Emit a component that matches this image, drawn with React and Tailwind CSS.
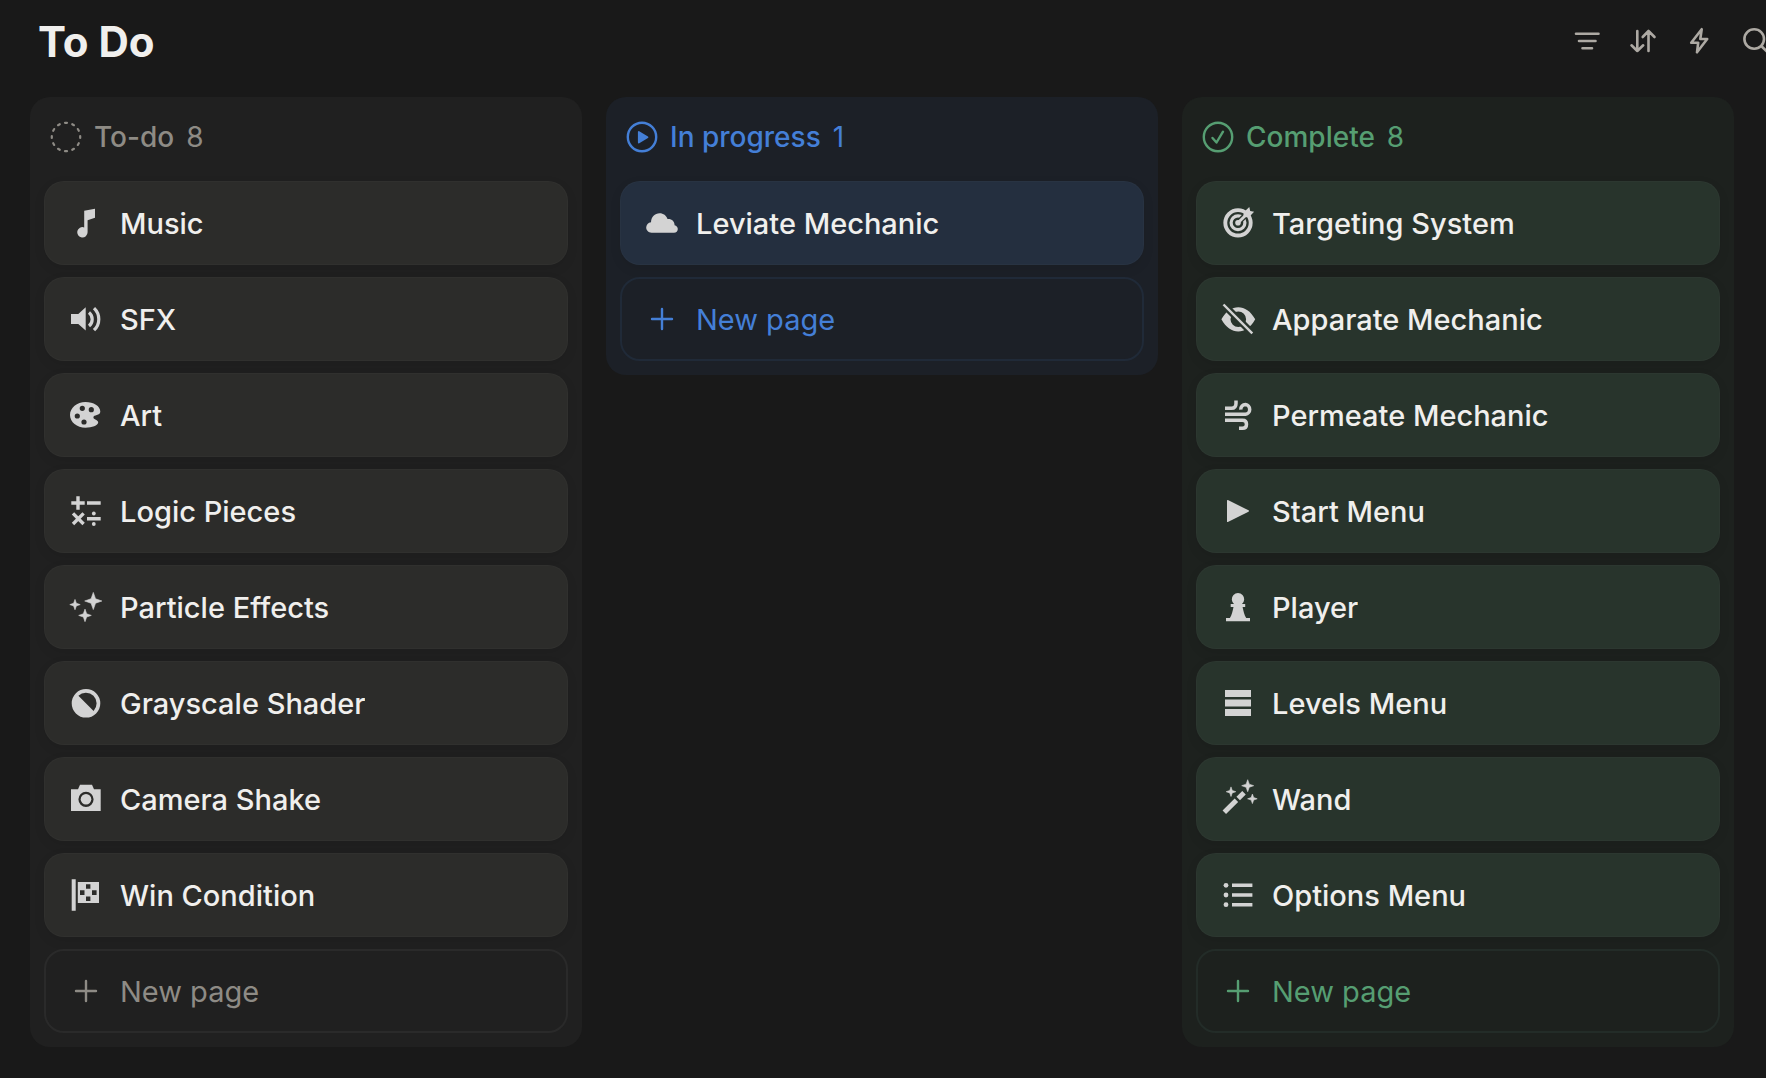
const Star = ({ x, y, r }) => {
  const k = r * 0.26;
  return (
    <path
      d={`M${x} ${y - r}L${x + k} ${y - k}L${x + r} ${y}L${x + k} ${y + k}L${x} ${y + r}L${x - k} ${y + k}L${x - r} ${y}L${x - k} ${y - k}Z`}
      stroke="currentColor"
      strokeWidth="0.6"
      strokeLinejoin="round"
    />
  );
};

const glyphs = {
  music: <path d="M14.2 3.7 25 1.7v9L17.6 13.3V25.3a5.2 5.2 0 1 1-3.4-4.9Z" />,
  sound: (
    <>
      <path d="M1 11h7.3l7.4-6.8v23.2L8.3 21H1Z" />
      <path d="M19 9.4q3.2 2.6 3.2 6.8T19 23M24 5.2q4.8 4.6 4.8 11T24 27.2" fill="none" stroke="currentColor" strokeWidth="3.2" />
    </>
  ),
  palette: (
    <path
      fillRule="evenodd"
      d="M15.5 3C7 3 0 8.8 0 15.9s7 12.8 15.5 12.8c6.5 0 12.5-2.2 12.7-5.2.1-2.7-4.8-2.5-4.8-5.2 0-2.8 6.9-1.3 6.9-5.8C30.3 7 23.5 3 15.5 3ZM12.3 6.7a2.6 2.6 0 1 1 0 5.2 2.6 2.6 0 0 1 0-5.2ZM21.3 8.1a2.6 2.6 0 1 1 0 5.2 2.6 2.6 0 0 1 0-5.2ZM7.3 14.4a2.6 2.6 0 1 1 0 5.2 2.6 2.6 0 0 1 0-5.2ZM14 20.4a2.6 2.6 0 1 1 0 5.2 2.6 2.6 0 0 1 0-5.2Z"
    />
  ),
  math: (
    <>
      <path d="M8 1.3v13.4M1.3 8h13.4M17 8h13.7M3 18.4l10.6 10.6M13.6 18.4 3 29M17 23.7h13.7" stroke="currentColor" strokeWidth="3.4" />
      <circle cx="23.8" cy="18.5" r="1.9" />
      <circle cx="23.8" cy="29" r="1.9" />
    </>
  ),
  sparkles: (
    <>
      <Star x={23.3} y={10} r={8.6} />
      <Star x={5} y={13.6} r={5.2} />
      <Star x={15} y={24.4} r={6.3} />
    </>
  ),
  contrast: (
    <path
      fillRule="evenodd"
      d="M16 2a14.3 14.3 0 1 1 0 28.6A14.3 14.3 0 0 1 16 2ZM8.4 8.7 23.6 23.9A10.75 10.75 0 0 0 8.4 8.7Z"
    />
  ),
  camera: (
    <>
      <path
        fillRule="evenodd"
        d="M10 1.7h12l2 4.6h6.7V28H1V6.3h7ZM16 8.7a7.6 7.6 0 1 0 0 15.2 7.6 7.6 0 0 0 0-15.2Z"
      />
      <circle cx="16" cy="16.3" r="5.3" />
    </>
  ),
  flag: (
    <path
      fillRule="evenodd"
      d="M1.7.3h4v31.4h-4ZM7.8 3H29v21H7.8ZM16 5.3v4.4h4.4V5.3ZM10 11.3v4.6h4.5v-4.6ZM22 11.3v4.6h4.6v-4.6ZM16 17.4v4.5h4.4v-4.5Z"
    />
  ),
  cloud: (
    <path d="M5.5 25.7C2.3 25.7.2 23.4.2 20.6c0-2.8 2-5 4.8-5.4.2-5.2 3.8-8.9 8.6-8.9 3.8 0 6.8 2.3 7.9 5.7 4.3-.4 7.1 2.4 7.1 6.2 2 .5 3.2 2 3.2 3.8 0 2.2-1.6 3.7-3.8 3.7Z" />
  ),
  target: (
    <>
      <circle cx="16" cy="15.8" r="12.7" fill="none" stroke="currentColor" strokeWidth="3.9" />
      <circle cx="16" cy="15.8" r="6.9" fill="none" stroke="currentColor" strokeWidth="3.2" />
      <path d="M18.5 13.3 23.500 8.300" stroke="#28342c" strokeWidth="5.500" />
      <path d="M16 15.8 26 6" stroke="currentColor" strokeWidth="3" />
      <circle cx="16" cy="15.8" r="2.800" />
      <path d="m21.500 5.500 5.800-5.500.9 4 3.900.8-5.400 5.600-5.200-.6Z" />
    </>
  ),
  eyeOff: (
    <>
      <path
        fillRule="evenodd"
        d="M-.6 16.300C4 8 10 4.200 16.300 4.200S28.600 8 33.200 16.300C28.600 24.600 22.600 28.400 16.300 28.400S4 24.600-.6 16.300ZM16.300 8.500a7.800 7.800 0 1 0 0 15.600 7.800 7.800 0 0 0 0-15.600Z"
      />
      <path d="M2 2 30 30" stroke="#28342c" strokeWidth="7" />
      <path d="M1.500 1.500 30.300 30.300" stroke="currentColor" strokeWidth="2.400" />
    </>
  ),
  wind: (
    <path
      d="M3 9.300h6.500c3 0 4.500-1.800 4.500-4.800V1.500M3 15.300h20.500a4.900 4.900 0 0 0 0-9.700c-2.800 0-4.900 2-4.700 5M3 21.300h17.500c3 0 4 1.700 4 3.900 0 2.400-1.500 4.100-4 4.100H17"
      fill="none"
      stroke="currentColor"
      strokeWidth="3.500"
    />
  ),
  play: <path d="M5 5.600c0-.6.400-.8.900-.6L26.500 15.300c.7.400.7 1 0 1.400L5.900 27c-.5.200-.9 0-.9-.6Z" />,
  pawn: (
    <path d="M12 13a6.200 6.200 0 1 1 8 0h3.200v2.900h-2.600c.8 4.300 1.800 8 3.600 11.100H28v3.300H4V27h3.900c1.800-3.100 2.800-6.800 3.600-11.100H8.700V13Z" />
  ),
  bars: <path d="M3 3h26v7H3ZM3 12.500h26v7H3ZM3 22h26v7H3Z" />,
  wand: (
    <>
      <path d="M2.300 29.200 14.400 17.300M16.200 15.500 22 9.800" stroke="currentColor" strokeWidth="5" />
      <Star x={25.700} y={2.700} r={6} />
      <Star x={9} y={8.700} r={4.800} />
      <Star x={30.400} y={15.800} r={4.800} />
    </>
  ),
  list: (
    <>
      <circle cx="4" cy="6.300" r="2.400" />
      <circle cx="4" cy="16" r="2.400" />
      <circle cx="4" cy="25.700" r="2.400" />
      <path d="M10 6.300h20.400M10 16h20.400M10 25.700h20.400" stroke="currentColor" strokeWidth="3.500" />
    </>
  ),
};

const Icon = ({ children, className = "" }) => (
  <svg viewBox="0 0 32 32" aria-hidden="true" fill="currentColor" className={`size-8 shrink-0 overflow-visible ${className}`}>
    {children}
  </svg>
);

const LineIcon = ({ children }) => (
  <svg
    viewBox="0 0 32 32"
    aria-hidden="true"
    fill="none"
    stroke="currentColor"
    strokeWidth="2.600"
    strokeLinecap="round"
    strokeLinejoin="round"
    className="size-8 shrink-0"
  >
    {children}
  </svg>
);

const ticks = [0, 1, 2, 3, 4, 5, 6, 7, 8, 9, 10, 11];

const columns = [
  {
    name: "To-do",
    count: 8,
    column: "bg-[#202020]",
    accent: "text-[#8e8b85]",
    card: "bg-[#2c2c2a]",
    outline: "border-[#2a2a2a]",
    status: (
      <>
        {ticks.map((i) => (
          <path key={i} d="M15 1.800h2" strokeWidth="2.200" transform={`rotate(${i * 30} 16 16)`} />
        ))}
      </>
    ),
    items: [
      ["music", "Music"],
      ["sound", "SFX"],
      ["palette", "Art"],
      ["math", "Logic Pieces"],
      ["sparkles", "Particle Effects"],
      ["contrast", "Grayscale Shader"],
      ["camera", "Camera Shake"],
      ["flag", "Win Condition"],
    ],
  },
  {
    name: "In progress",
    count: 1,
    column: "bg-[#1c2027]",
    accent: "text-[#447fd7]",
    card: "bg-[#242f3f]",
    outline: "border-[#202a38]",
    status: (
      <>
        <circle cx="16" cy="16" r="14.200" strokeWidth="2.400" />
        <path d="M12.800 11v10.500L21.500 16.200Z" fill="currentColor" strokeWidth="1.800" />
      </>
    ),
    items: [["cloud", "Leviate Mechanic"]],
  },
  {
    name: "Complete",
    count: 8,
    column: "bg-[#1d211e]",
    accent: "text-[#569e72]",
    card: "bg-[#28342c]",
    outline: "border-[#232c28]",
    status: (
      <>
        <circle cx="16" cy="16" r="14.200" strokeWidth="2.400" />
        <path d="m10.500 17 4 4.500 6.500-10.800" strokeWidth="2.400" />
      </>
    ),
    items: [
      ["target", "Targeting System"],
      ["eyeOff", "Apparate Mechanic"],
      ["wind", "Permeate Mechanic"],
      ["play", "Start Menu"],
      ["pawn", "Player"],
      ["bars", "Levels Menu"],
      ["wand", "Wand"],
      ["list", "Options Menu"],
    ],
  },
];

const tools = [
  ["Filter", <path key="p" d="M5 8.700h22.500M8 16h16.500M11.500 23.300h9.500" />],
  ["Sort", <path key="p" d="M10.300 6v20M4.500 20.300l5.800 5.700 5.900-5.700M21.500 26V6M15.700 12l5.800-6 6 6" />],
  ["Automations", <path key="p" d="M18.700 4.200 17.300 14H24.200L14 27.300 15.200 17.700H8.200Z" />],
  ["Search", <path key="p" d="M25 14a9.800 9.800 0 1 1-19.600 0 9.800 9.800 0 0 1 19.600 0ZM22.300 21l8 8" />],
];

function Card({ icon, title, color }) {
  return (
    <li>
      <a
        href="#"
        className={`flex h-21 items-center gap-[18px] rounded-[20px] border border-white/2 px-[25px] text-[29px] leading-9 font-medium text-[#f0efed] shadow-[0_4px_12px_rgba(0,0,0,0.08)] ${color}`}
      >
        <Icon className="text-[#d3d3d3]">{glyphs[icon]}</Icon>
        <span className="truncate pt-0.5">{title}</span>
      </a>
    </li>
  );
}

function Column({ group }) {
  return (
    <section className={`rounded-[20px] p-3.5 ${group.column}`}>
      <header className={`flex h-[70px] items-start gap-3 px-1.5 pt-2.5 text-[28px] leading-8 ${group.accent}`}>
        <LineIcon>{group.status}</LineIcon>
        <h2 className="font-medium">{group.name}</h2>
        <span>{group.count}</span>
      </header>
      <ul className="flex flex-col gap-3">
        {group.items.map(([icon, title]) => (
          <Card key={title} icon={icon} title={title} color={group.card} />
        ))}
        <li>
          <button
            type="button"
            className={`flex h-21 w-full items-center gap-[18px] rounded-[20px] border-2 px-6 text-[29px] leading-9 ${group.outline} ${group.accent}`}
          >
            <LineIcon>
              <path d="M16 6v20M6 16h20" strokeWidth="2.400" />
            </LineIcon>
            <span className="pt-0.5">New page</span>
          </button>
        </li>
      </ul>
    </section>
  );
}

export default function App() {
  return (
    <div className="min-h-screen overflow-hidden bg-[#191919] font-['Inter',sans-serif]">
      <header className="flex h-[97px] items-start justify-between pt-[18px] pl-[38px]">
        <h1 className="text-[42px] leading-12 font-bold text-[#f0efed]">To Do</h1>
        <div className="-mr-[5px] flex gap-6 pt-[7px] text-[#ada9a3]">
          {tools.map(([label, drawing]) => (
            <button key={label} type="button" aria-label={label}>
              <LineIcon>{drawing}</LineIcon>
            </button>
          ))}
        </div>
      </header>
      <main className="grid grid-cols-3 items-start gap-6 pr-8 pl-[30px]">
        {columns.map((group) => (
          <Column key={group.name} group={group} />
        ))}
      </main>
    </div>
  );
}
